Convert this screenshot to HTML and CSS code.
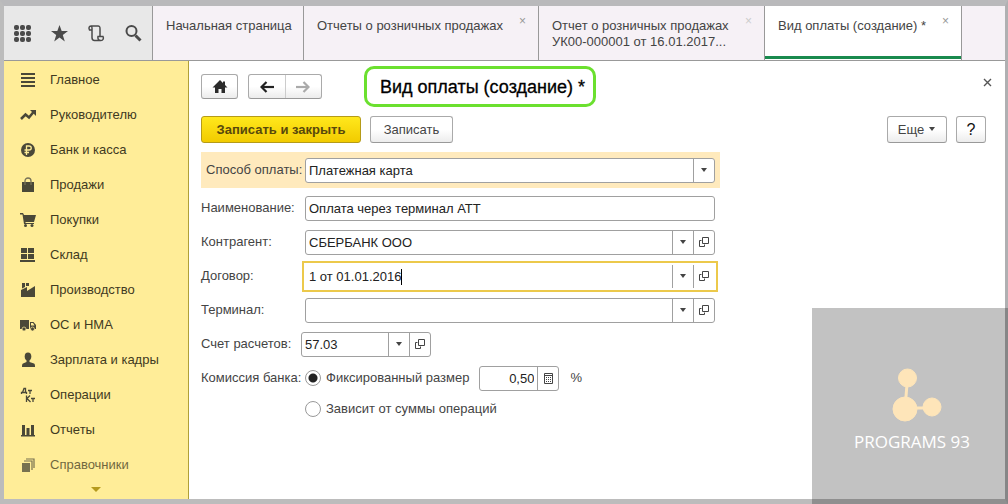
FILE: index.html
```
<!DOCTYPE html>
<html lang="ru">
<head>
<meta charset="utf-8">
<title>Вид оплаты (создание)</title>
<link rel="stylesheet" href="styles.css">
</head>
<body>
<svg class="defs" aria-hidden="true">
  <symbol id="down" viewBox="0 0 7 5"><path d="M0 0h6L3 4z" fill="#444"/></symbol>
  <symbol id="open" viewBox="0 0 10 10"><path d="M3.500.5h6v6h-6zM2.500 3.500H.5v6h5v-2" fill="none" stroke="#444"/></symbol>
</svg>
<div class="window">
  <header class="topbar">
    <div class="tools">
      <button class="tool" aria-label="Меню"><svg width="19" height="19" viewBox="0 0 19 19" fill="#4a4a4a"><rect x="1" y="1" width="5" height="5" rx="2"/><rect x="7" y="1" width="5" height="5" rx="2"/><rect x="13" y="1" width="5" height="5" rx="2"/><rect x="1" y="7" width="5" height="5" rx="2"/><rect x="7" y="7" width="5" height="5" rx="2"/><rect x="13" y="7" width="5" height="5" rx="2"/><rect x="1" y="13" width="5" height="5" rx="2"/><rect x="7" y="13" width="5" height="5" rx="2"/><rect x="13" y="13" width="5" height="5" rx="2"/></svg></button>
      <button class="tool" aria-label="Избранное"><svg width="19" height="19" viewBox="0 0 19 19"><path d="M9.500 1l2.200 6.100H18l-5.200 3.900 2 6.500-5.300-4-5.300 4 2-6.500L1 7.100h6.300z" fill="#4a4a4a"/></svg></button>
      <button class="tool" aria-label="История"><svg width="19" height="19" viewBox="0 0 19 19" fill="none" stroke="#4a4a4a" stroke-width="1.500"><path d="M5 6H2.500C1.500 4 2 2 4 2h7c2 0 2 1 2 3v7.500h3c1 2 0 4-2 4H7.500c-2 0-2.500-1-2.500-3zM4 2c1.500.5 1 2 1 4M13 12.500h-2c-.5 2 .5 4 2.500 4"/></svg></button>
      <button class="tool" aria-label="Поиск"><svg width="19" height="19" viewBox="0 0 19 19" fill="none" stroke="#4a4a4a"><circle cx="7.500" cy="7" r="5" stroke-width="2"/><path d="M11.500 11.500l5 5" stroke-width="3"/></svg></button>
    </div>
    <nav class="tabs">
      <div class="tab tab-home"><a href="#">Начальная страница</a></div>
      <div class="tab tab-list"><a href="#">Отчеты о розничных продажах</a><button class="tab-close" aria-label="Закрыть вкладку">×</button></div>
      <div class="tab tab-report"><a href="#">Отчет о розничных продажах<br>УК00-000001 от 16.01.2017...</a><button class="tab-close faint" aria-label="Закрыть вкладку">×</button></div>
      <div class="tab tab-current"><a href="#">Вид оплаты (создание) *</a><button class="tab-close" aria-label="Закрыть вкладку">×</button></div>
    </nav>
  </header>
  <div class="body">
    <aside class="sidebar">
      <a class="item" href="#"><svg class="ico" viewBox="0 0 16 16"><path d="M1 1h14v2H1zM1 5h14v2H1zM1 9h14v2H1zM1 13h14v2H1z"/></svg>Главное</a>
      <a class="item" href="#"><svg class="ico" viewBox="0 0 16 16"><path d="M1 12l4.500-4.500 3.500 3L13.500 5" fill="none" stroke="#4a4838" stroke-width="2.500"/><path d="M10 3h6v6z"/></svg>Руководителю</a>
      <a class="item" href="#"><svg class="ico" viewBox="0 0 16 16"><circle cx="8" cy="8" r="7"/><path d="M6.500 13V4h2.500c3 0 3 4 0 4H4.500M4.500 10.500H9" fill="none" stroke="#ffed98" stroke-width="1.300"/></svg>Банк и касса</a>
      <a class="item" href="#"><svg class="ico" viewBox="0 0 16 16"><path d="M2 5h12v10H2z"/><path d="M5 8V4c0-4 6-4 6 0v4" fill="none" stroke="#777258" stroke-width="1.300"/></svg>Продажи</a>
      <a class="item" href="#"><svg class="ico" viewBox="0 0 16 16"><path d="M0 1h3l1 2h12l-2 7H5.500v1H14v1H4L2.500 2.500H0z"/><circle cx="5.500" cy="13.500" r="1.500"/><circle cx="12" cy="13.500" r="1.500"/></svg>Покупки</a>
      <a class="item" href="#"><svg class="ico" viewBox="0 0 16 16"><path d="M1 1h6v5H1zM8 1h6v5H8zM1 7h6v5H1zM8 7h6v5H8zM0 13h15v2H0z"/></svg>Склад</a>
      <a class="item" href="#"><svg class="ico" viewBox="0 0 16 16"><path d="M1 15V8l6-3v4l8-5v11zM2 1h3v4L2 6.500zM6 1h3v3L6 4z"/></svg>Производство</a>
      <a class="item" href="#"><svg class="ico" viewBox="0 0 16 16"><path d="M0 3h9v9H0zM10 5h3.500L16 8v4h-6z"/><path d="M11 6h2l1.500 2.500H11z" fill="#ffed98"/><circle cx="4" cy="12" r="2" stroke="#ffed98" stroke-width=".7"/><circle cx="12.500" cy="12" r="2" stroke="#ffed98" stroke-width=".7"/></svg>ОС и НМА</a>
      <a class="item" href="#"><svg class="ico" viewBox="0 0 16 16"><ellipse cx="8" cy="4.500" rx="3.300" ry="4"/><path d="M6.500 7h3v3l4.500 1.500c1 .5 1 2 1 3.500H2c0-1.500 0-3 1-3.500L6.500 10z"/></svg>Зарплата и кадры</a>
      <a class="item" href="#"><svg class="ico" viewBox="0 0 16 16"><g fill="none" stroke="#4a4838" stroke-width="1.300"><path d="M1.500 7V5.500h5V7M2.500 5.500L4 1.500h1.500v4M8 3.500h4M10 3.500V7M6.500 8.500V15M10 8.500L7 11.500l3.500 3.500M11 11.500h4M13 11.500V15"/></g></svg>Операции</a>
      <a class="item" href="#"><svg class="ico" viewBox="0 0 16 16"><path d="M2 3h3v10H2zM6.500 6h3v7h-3zM11 3h3v10h-3zM1 13h14v1.500H1z"/></svg>Отчеты</a>
      <a class="item fading" href="#"><svg class="ico" viewBox="0 0 16 16"><path d="M2 6h8v9H2z"/><path d="M4 4h8v9M6 2h8v9" fill="none" stroke="#4a4838" stroke-width="1.200"/></svg>Справочники</a>
      <button class="more-sections" aria-label="Ещё разделы"><svg width="10" height="6" viewBox="0 0 10 6"><path d="M0 0h10L5 5z" fill="#b59a1d"/></svg></button>
    </aside>
    <main class="main">
      <div class="heading">
        <button class="btn home" aria-label="Домой"><svg width="16" height="14" viewBox="0 0 16 14"><path d="M8 0l3 3V1.500h2V5l2.500 2.500H13V13H9.500V9h-3v4H3V7.500H.5z" fill="#2b2b2b"/></svg></button>
        <div class="history">
          <button aria-label="Назад"><svg width="14" height="12" viewBox="0 0 14 12"><path d="M14 6H3" stroke="#222" stroke-width="2.200"/><path d="M6.500 1L1.500 6l5 5" fill="none" stroke="#222" stroke-width="2.200"/></svg></button>
          <button aria-label="Вперёд"><svg width="14" height="12" viewBox="0 0 14 12"><path d="M0 6h11" stroke="#aaa" stroke-width="2.200"/><path d="M7.500 1l5 5-5 5" fill="none" stroke="#aaa" stroke-width="2.200"/></svg></button>
        </div>
        <h1 class="title">Вид оплаты (создание) *</h1>
        <button class="close" aria-label="Закрыть"><svg width="9" height="9" viewBox="0 0 9 9"><path d="M1 1l7 7M8 1L1 8" stroke="#555" stroke-width="1.400"/></svg></button>
      </div>
      <div class="commands">
        <button class="btn primary">Записать и закрыть</button>
        <button class="btn save">Записать</button>
        <button class="btn more">Еще <svg width="7" height="5"><use href="#down"/></svg></button>
        <button class="btn help">?</button>
      </div>
      <form class="form">
        <div class="row highlighted">
          <label for="method">Способ оплаты:</label>
          <div class="field"><select id="method"><option>Платежная карта</option></select><span class="pick"><svg width="7" height="5"><use href="#down"/></svg></span></div>
        </div>
        <div class="row">
          <label for="name">Наименование:</label>
          <div class="field"><input id="name" type="text" value="Оплата через терминал АТТ"></div>
        </div>
        <div class="row">
          <label for="partner">Контрагент:</label>
          <div class="field"><input id="partner" type="text" value="СБЕРБАНК ООО"><button type="button" class="pick" aria-label="Выбрать"><svg width="7" height="5"><use href="#down"/></svg></button><button type="button" class="pick" aria-label="Открыть"><svg width="10" height="10"><use href="#open"/></svg></button></div>
        </div>
        <div class="row">
          <label for="contract">Договор:</label>
          <div class="field focused"><input id="contract" type="text" value="1 от 01.01.2016"><i class="caret"></i><button type="button" class="pick" aria-label="Выбрать"><svg width="7" height="5"><use href="#down"/></svg></button><button type="button" class="pick" aria-label="Открыть"><svg width="10" height="10"><use href="#open"/></svg></button></div>
        </div>
        <div class="row">
          <label for="terminal">Терминал:</label>
          <div class="field"><input id="terminal" type="text"><button type="button" class="pick" aria-label="Выбрать"><svg width="7" height="5"><use href="#down"/></svg></button><button type="button" class="pick" aria-label="Открыть"><svg width="10" height="10"><use href="#open"/></svg></button></div>
        </div>
        <div class="row account">
          <label for="account">Счет расчетов:</label>
          <div class="field"><input id="account" type="text" value="57.03"><button type="button" class="pick" aria-label="Выбрать"><svg width="7" height="5"><use href="#down"/></svg></button><button type="button" class="pick" aria-label="Открыть"><svg width="10" height="10"><use href="#open"/></svg></button></div>
        </div>
        <div class="row">
          <span class="caption">Комиссия банка:</span>
          <input class="radio" type="radio" name="fee" id="fixed" checked><label class="choice" for="fixed">Фиксированный размер</label>
          <div class="field percent"><input type="text" value="0,50" aria-label="Процент"><button type="button" class="pick" aria-label="Калькулятор"><svg width="9" height="11" viewBox="0 0 9 11"><path d="M.5.5h8v10h-8zM.5 2.500h8" fill="none" stroke="#444"/><path d="M2 4.500h5M2 6.500h5M2 8.500h5" stroke="#444" stroke-dasharray="1 1"/></svg></button></div>
          <span>%</span>
        </div>
        <div class="row last">
          <span class="caption"></span>
          <input class="radio" type="radio" name="fee" id="depends"><label class="choice" for="depends">Зависит от суммы операций</label>
        </div>
      </form>
    </main>
  </div>
  <div class="watermark">
    <svg width="60" height="54" viewBox="-10 0 60 54" fill="#fee5b9" stroke="#fee5b9"><path d="M15.500 10L13 41M13 40h28" fill="none" stroke-width="3"/><circle cx="15.500" cy="10" r="9"/><circle cx="13" cy="41" r="12"/><circle cx="40" cy="39" r="9"/></svg>
    <span>PROGRAMS 93</span>
  </div>
</div>
</body>
</html>
```
FILE: styles.css
```
* { box-sizing: border-box; }
body {
  margin: 0;
  font: 13px/16px "Liberation Sans", Arial, sans-serif;
  color: #444;
}
button, input, select { font: inherit; color: inherit; margin: 0; }
button { padding: 0; border: 0; background: none; display: flex; align-items: center; justify-content: center; }
a { color: inherit; text-decoration: none; }
.defs { display: none; }

.window {
  position: relative;
  min-height: 100vh;
  display: flex;
  flex-direction: column;
  border-style: solid;
  border-width: 6px 3px 5px 4px;
  border-color: #b9b9bb #b0b0b2 #bcbcbc #bcbcbc;
}

.topbar { display: flex; height: 55px; background: #f6f1f6; border-bottom: 1px solid #999; }
.tools {
  display: flex;
  align-items: center;
  gap: 18px;
  width: 149px;
  padding-left: 9px;
  background: #e8e8e8;
  border-right: 1px solid #999;
}
.tabs { display: flex; flex: 1; }
.tab {
  display: flex;
  align-items: flex-start;
  justify-content: space-between;
  padding: 12px 12px 0 13px;
  border-right: 1px solid #999;
  white-space: nowrap;
}
.tab-home { width: 151px; }
.tab-list { width: 235px; }
.tab-report { width: 226px; }
.tab-current { width: 197px; background: #fff; box-shadow: inset 0 -1px #fff, inset 0 -4px #198a4e; }
.tab-close { color: #999; line-height: 6px; font-size: 12px; }
.faint { color: #ccc; }

.body { display: flex; flex: 1; }
.sidebar {
  width: 185px;
  padding-top: 1px;
  background: #ffed98;
  border-right: 1px solid #b0a038;
  color: #3f3a22;
}
.item { display: flex; align-items: center; gap: 14px; height: 35px; padding-left: 16px; }
.ico { width: 16px; height: 16px; fill: #4a4838; }
.fading { opacity: .75; }
.more-sections { width: 100%; height: 16px; }

.main { flex: 1; min-width: 0; padding: 5px 19px 0 12px; background: #fff; }
.heading { display: flex; align-items: center; height: 41px; }
.btn, .history {
  border: 1px solid #aaa;
  border-bottom-color: #999;
  border-radius: 3px;
  background: linear-gradient(#fff 50%, #ececec);
}
.home { width: 37px; height: 25px; margin-right: 10px; }
.history { display: flex; width: 74px; height: 25px; }
.history button { flex: 1; }
.history button + button { border-left: 1px solid #ccc; }
.title {
  margin: 0 0 0 42px;
  width: 232px;
  height: 41px;
  padding-left: 13px;
  border: 3px solid #6be02f;
  border-radius: 10px;
  color: #000;
  font-size: 18px;
  font-weight: 400;
  line-height: 36px;
  white-space: nowrap;
  -webkit-text-stroke: 0.3px #000;
}
.close { width: 16px; height: 16px; margin: -8px -9px 0 auto; }

.commands { display: flex; gap: 9px; margin-top: 9px; }
.commands .btn { height: 27px; }
.commands .primary {
  width: 160px;
  font-weight: 700;
  color: #57480c;
  background: linear-gradient(#ffe81c, #f2cb00);
  border-color: #b59b18;
}
.save { width: 83px; }
.more { width: 60px; gap: 5px; margin-left: auto; }
.commands .help { width: 30px; color: #111; font-size: 16px; }

.form { max-width: 519px; margin-top: 9px; }
.row { display: flex; align-items: center; height: 34px; padding-right: 5px; }
.row > label:first-child, .caption { flex: none; width: 104px; white-space: nowrap; }
.highlighted { height: 36px; margin-bottom: 3px; padding-left: 5px; background: #ffeabd; }
.highlighted > label:first-child { width: 99px; }
.account > label:first-child { width: 100px; }
.field {
  position: relative;
  display: flex;
  flex: 1;
  height: 25px;
  border: 1px solid #a0a0a0;
  border-radius: 3px;
  background: #fff;
  color: #222;
}
.field input, .field select {
  flex: 1;
  min-width: 0;
  padding: 1px 3px 0;
  border: 0;
  outline: 0;
  background: none;
  appearance: none;
}
.pick { display: flex; align-items: center; justify-content: center; width: 21px; border-left: 1px solid #a0a0a0; }
.focused { border-color: transparent; outline: 2px solid #ecc94b; outline-offset: 1px; border-radius: 0; }
.caret { position: absolute; left: 95px; top: 4px; width: 1px; height: 16px; background: #000; }
.account .field { flex: none; width: 130px; }
.radio {
  flex: none;
  appearance: none;
  width: 16px;
  height: 16px;
  margin: 0 5px 0 0;
  border: 1px solid #999;
  border-radius: 50%;
  background: #fff;
}
.radio:checked { background: radial-gradient(circle, #222 4px, #fff 5px); }
.choice { white-space: nowrap; }
.field.percent { flex: none; width: 80px; margin: 0 11px 0 10px; }
.percent input { text-align: right; }
.last { height: 28px; }

.watermark {
  position: absolute;
  right: -3px;
  bottom: -5px;
  width: 196px;
  height: 196px;
  padding: 60px 0 0 4px;
  display: flex;
  flex-direction: column;
  align-items: center;
  gap: 10px;
  background: rgba(0, 0, 0, .24);
  color: #fff;
  font: 17px/20px "Open Sans", sans-serif;
}
```
